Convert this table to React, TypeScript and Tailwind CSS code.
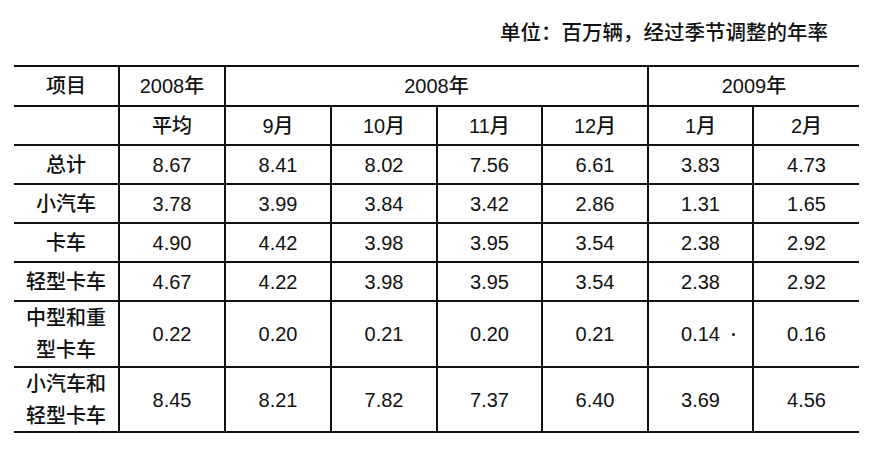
const months = ["平均", "9月", "10月", "11月", "12月", "1月", "2月"];

const rows: { label: string[]; values: string[] }[] = [
  { label: ["总计"], values: ["8.67", "8.41", "8.02", "7.56", "6.61", "3.83", "4.73"] },
  { label: ["小汽车"], values: ["3.78", "3.99", "3.84", "3.42", "2.86", "1.31", "1.65"] },
  { label: ["卡车"], values: ["4.90", "4.42", "3.98", "3.95", "3.54", "2.38", "2.92"] },
  { label: ["轻型卡车"], values: ["4.67", "4.22", "3.98", "3.95", "3.54", "2.38", "2.92"] },
  { label: ["中型和重", "型卡车"], values: ["0.22", "0.20", "0.21", "0.20", "0.21", "0.14", "0.16"] },
  { label: ["小汽车和", "轻型卡车"], values: ["8.45", "8.21", "7.82", "7.37", "6.40", "3.69", "4.56"] },
];

const cell = "flex items-center justify-center border-b-2 border-[#111]";

const App = () => {
  return (
    <div
      className="w-[871px] h-[454px] bg-white text-[#111] text-[20px] font-medium"
      style={{ fontFamily: '"Liberation Sans", "Noto Sans CJK SC", sans-serif' }}
    >
      <div className="h-[65px] pt-[21px] pr-[43px] text-right leading-[24px] text-[20.5px]">
        单位：百万辆，经过季节调整的年率
      </div>

      <div className="ml-[14px] w-[845px] grid grid-cols-[106px_106px_106px_106px_105px_106px_105px_105px] grid-rows-[40px_39px_39px_39px_39px_39px_66px_65px] border-t-2 border-[#111]">
        {/* header row 1 */}
        <div className={`${cell} border-r-2`}>项目</div>
        <div className={`${cell} border-r-2`}>2008年</div>
        <div className={`${cell} border-r-2 col-span-4`}>2008年</div>
        <div className={`${cell} col-span-2`}>2009年</div>

        {/* header row 2 */}
        <div className={`${cell} border-r-2`}></div>
        {months.map((m, i) => (
          <div key={m} className={`${cell} ${i < months.length - 1 ? "border-r-2" : ""}`}>
            {m}
          </div>
        ))}

        {rows.map((row) => (
          <div key={row.label.join("")} className="contents">
            <div className={`${cell} border-r-2 flex-col leading-[32px]`}>
              {row.label.map((l) => (
                <span key={l}>{l}</span>
              ))}
            </div>
            {row.values.map((v, i) => (
              <div
                key={i}
                className={`${cell} relative ${i < row.values.length - 1 ? "border-r-2" : ""}`}
              >
                {v}
                {v === "0.14" && (
                  <span className="absolute left-[83px] top-[31px] w-[3px] h-[3px] rounded-full bg-[#111]" />
                )}
              </div>
            ))}
          </div>
        ))}
      </div>
    </div>
  );
};

export default App;
